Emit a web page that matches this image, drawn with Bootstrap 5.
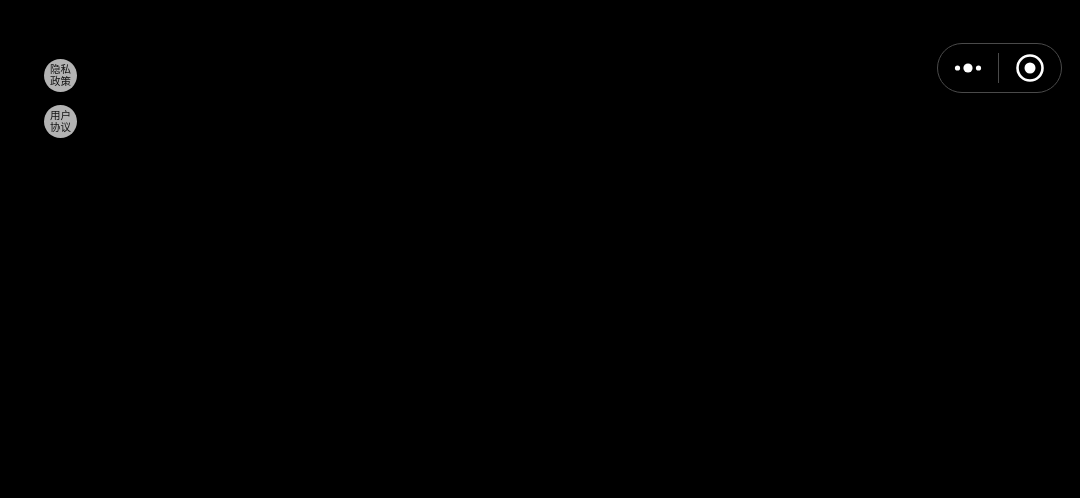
<!DOCTYPE html>
<html lang="zh">
<head>
<meta charset="utf-8">
<title>Policy</title>
<link href="https://cdn.jsdelivr.net/npm/bootstrap@5.3.0/dist/css/bootstrap.min.css" rel="stylesheet">
<style>
html, body { height: 100%; background: #000; overflow: hidden; }
.stage { height: 498px; padding: 43px 18px 0 44px; background: #000; }
.side-links { padding-top: 16px; gap: 14px; }
.round-link { width: 33px; height: 33px; margin-bottom: -1px; padding-bottom: 1px; border-radius: 50%; background: #b3b3b3; color: #111; font: 10.5px/12px "Noto Sans CJK SC", "Liberation Sans", sans-serif; text-decoration: none; text-align: center; will-change: transform; }
.capsule { width: 125px; height: 50px; border: 1px solid #4a4a4a; border-radius: 25px; }
.capsule-left { width: 60px; }
.capsule-right { flex: 1 1 0; }
.capsule-rule { width: 1px; height: 30px; background: #4a4a4a; }
</style>
</head>
<body>
<div class="stage d-flex justify-content-between align-items-start">
  <div class="side-links d-flex flex-column">
    <a class="round-link d-flex align-items-center justify-content-center" href="#"><span>隐私<br>政策</span></a>
    <a class="round-link d-flex align-items-center justify-content-center" href="#"><span>用户<br>协议</span></a>
  </div>
  <div class="capsule d-flex align-items-center">
    <div class="capsule-left d-flex justify-content-center">
      <svg width="28" height="12" viewBox="0 0 28 12" aria-hidden="true"><circle cx="3.5" cy="6" r="2.6" fill="#fff"/><circle cx="14" cy="6" r="4.6" fill="#fff"/><circle cx="24.500" cy="6" r="2.6" fill="#fff"/></svg>
    </div>
    <div class="capsule-rule"></div>
    <div class="capsule-right d-flex justify-content-center">
      <svg width="28" height="28" viewBox="0 0 28 28" aria-hidden="true"><circle cx="14" cy="14" r="12.500" fill="none" stroke="#fff" stroke-width="2.600"/><circle cx="14" cy="14" r="5.500" fill="#fff"/></svg>
    </div>
  </div>
</div>
<script src="https://cdn.jsdelivr.net/npm/bootstrap@5.3.0/dist/js/bootstrap.bundle.min.js"></script>
</body>
</html>
